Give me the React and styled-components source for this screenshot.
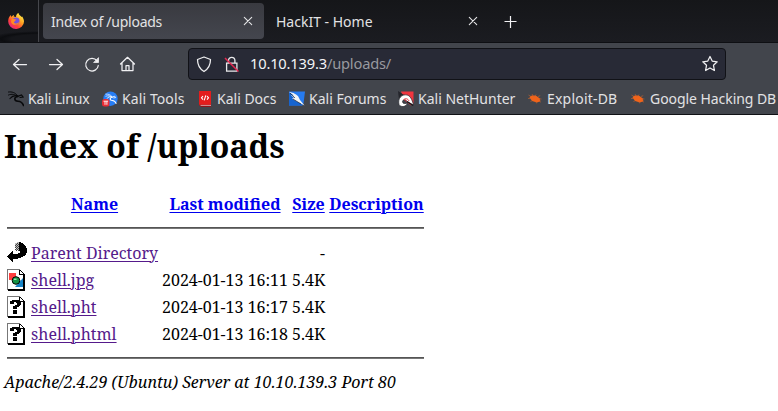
import React from "react";
import styled, { createGlobalStyle } from "styled-components";

const Global = createGlobalStyle`
  * { box-sizing: border-box; }
  html, body { margin: 0; background: #fff; overflow: hidden; }
`;

const Browser = styled.div`
  width: 778px;
  height: 411px;
  overflow: hidden;
  display: flex;
  flex-direction: column;
  background: #fff;
`;
const Chrome = styled.header`
  height: 115px;
  flex: none;
  color: #e2e2e4;
  background: #42454c;
  border-bottom: 1px solid #101115;
  font: 14px/20px "Noto Sans", sans-serif;
  white-space: nowrap;
`;
const TabStrip = styled.div`
  height: 43px;
  display: flex;
  background: linear-gradient(#151619, #1b1c21);
  border-bottom: 1px solid #0e0f13;
`;
const Pinned = styled.div`
  width: 39px;
  height: 42px;
  padding: 13px 0 0 8px;
  border-right: 1px solid #46474c;
  background: radial-gradient(ellipse 52px 8px at 40px 39px, #15161a 55%, #0c0d10 75%, transparent 100%);
  svg { display: block; }
`;
const Tab = styled.div`
  width: ${(p) => p.$width}px;
  height: 36px;
  margin: 3px 0 0 4px;
  padding: 0 10px 0 8px;
  display: flex;
  align-items: center;
  justify-content: space-between;
  border-radius: 4px;
  background: ${(p) => (p.$active ? "linear-gradient(#393a40, #44464e)" : "transparent")};
`;
const NewTab = styled.div`
  margin: 14px 0 0 14px;
  height: 16px;
`;
const Label = styled.span`
  display: block;
  letter-spacing: ${(p) => p.$track || 0}px;
`;
const TabLabel = styled(Label)`
  padding-top: 2px;
`;
const Toolbar = styled.div`
  height: 41px;
  display: flex;
  align-items: center;
  padding-left: 11px;
`;
const NavButtons = styled.div`
  display: flex;
  gap: 18px;
  width: 177px;
  svg { display: block; }
`;
const Address = styled.div`
  width: 538px;
  height: 32px;
  display: flex;
  align-items: center;
  padding: 0 6px;
  border: 1px solid #111217;
  border-radius: 4px;
  background: #282a36;
  color: #f4f4f6;
  svg { display: block; flex: none; }
`;
const Url = styled.span`
  flex: 1;
  margin-left: 9px;
  padding-bottom: 2px;
  font-size: 14.67px;
  letter-spacing: -0.18px;
`;
const Path = styled.span`
  color: #98999f;
`;
const Bookmarks = styled.nav`
  height: 30px;
  display: flex;
  padding-left: 8px;
`;
const Bookmark = styled.div`
  flex: none;
  width: ${(p) => p.$width}px;
  display: flex;
  align-items: center;
  gap: 4px;
  svg { display: block; flex: none; }
`;
const Page = styled.main`
  font: 16px/22px "Noto Serif", "Droid Serif", "DejaVu Serif Condensed", serif;
  color: #000;
  white-space: nowrap;
`;
const Title = styled.h1`
  margin: 9px 0 0 4px;
  font-size: 32px;
  line-height: 44px;
  font-weight: 700;
`;
const Listing = styled.div`
  margin: 21px 0 0 7px;
  width: 417px;
`;
const Row = styled.div`
  display: grid;
  grid-template-columns: 20px 127px 126px 33px 95px;
  column-gap: 4px;
  height: 27px;
  align-items: center;
  svg { display: block; }
`;
const HeadRow = styled(Row)`
  height: 38px;
  padding-bottom: 8px;
  text-align: center;
  font-weight: 700;
`;
const Rule = styled.hr`
  height: 2px;
  margin: 0;
  border: 0;
  border-top: 1px solid #555;
  border-bottom: 1px solid #777;
`;
const Files = styled.div`
  padding: 10px 0 10px;
`;
const Link = styled.a`
  color: ${(p) => (p.$visited ? "#551a8b" : "#0000ee")};
  text-decoration: underline;
  text-decoration-thickness: 1px;
  text-underline-offset: 2px;
`;
const Cell = styled.span`
  text-align: ${(p) => (p.$right ? "right" : "left")};
`;
const Footer = styled.address`
  margin: 12px 0 0 4px;
`;

const Firefox = () => (
  <svg width="16" height="16" viewBox="0 0 16 16">
    <defs>
      <linearGradient id="fx" x1=".85" y1=".1" x2=".2" y2=".95">
        <stop offset="0" stopColor="#fff04a" />
        <stop offset=".4" stopColor="#ff9a20" />
        <stop offset=".7" stopColor="#ff4238" />
        <stop offset="1" stopColor="#e52682" />
      </linearGradient>
    </defs>
    <path d="M1 4.500 2.500 2l1 2C4 3 5 2 6 2l-.3 1.600L8 4c0-2 1-3.400 2.500-4 .1 2 2 2.400 3.200 4l.5-.6C15.500 5.500 16 7 16 8.500A7.800 7.500 0 0 1 8 16 7.800 7.500 0 0 1 .2 8.500C.2 7 .5 5.500 1 4.500Z" fill="url(#fx)" />
    <circle cx="8.100" cy="8" r="3.400" fill="#7650dc" />
    <path d="M3.500 6.500C5 5.600 7 6 8.500 6.800 7 7.300 7 8.500 5.800 9.200c1 2 4.200 1.500 5.200-.5.400 3-6.500 5-8 .3Z" fill="#ff8a24" />
  </svg>
);
const Close = () => (
  <svg width="12" height="12" viewBox="0 0 12 12" stroke="#e4e4e6" strokeWidth="1.100" strokeLinecap="round">
    <path d="M2.300 2.300l7.400 7.400M9.700 2.300l-7.400 7.400" />
  </svg>
);
const Plus = () => (
  <svg width="16" height="16" viewBox="0 0 16 16" stroke="#f2f2f4" strokeWidth="1.200">
    <path d="M7.500 2v12M1.500 7.500h12" />
  </svg>
);
const NavIcon = ({ children }) => (
  <svg width="18" height="18" viewBox="0 0 18 18" fill="none" stroke="#f0f0f2" strokeWidth="1.250" strokeLinecap="round" strokeLinejoin="round">
    {children}
  </svg>
);
const Dragon = ({ color = "#08090b" }) => (
  <g fill="none" stroke={color} strokeLinecap="round">
    <path d="M.5 1C4 .5 7 1.500 9.500 4.500M.5 4C4 2.500 7 3.500 9 5" strokeWidth="1" />
    <path d="M2 7.500C4 5 7 4 10.500 5l3-1 1.500 2-3 .5" strokeWidth="1.200" />
    <path d="M10 5.500C5.500 6 6 10 10 10.200c3 .2 4.500 1.300 5.500 4.300" strokeWidth="1.600" />
  </g>
);
const Mark = ({ kind }) => (
  <svg width="16" height="16" viewBox="0 0 16 16">
    {kind === "linux" && <Dragon />}
    {kind === "tools" && (
      <>
        <circle cx="8.500" cy="7.700" r="7.200" fill="#267df5" />
        <g transform="translate(3.500 2.500) scale(.68)"><Dragon color="#fff" /></g>
        <rect x="0" y="8" width="7.500" height="7.500" rx="2.500" fill="#e92d35" />
        <path d="M1.500 10.200h4.600M3 10.200v3.600M4.900 10.200v3.600" stroke="#fff" strokeWidth=".9" fill="none" />
      </>
    )}
    {kind === "docs" && (
      <>
        <path d="M2 0h12v15.500H4l-2-1.500Z" fill="#e31d1d" />
        <path d="M2 13.700h12v2H4Z" fill="#8c0d13" />
        <path d="M3.500 14.400H14" stroke="#f8dada" strokeWidth=".7" />
        <path d="M6 5 4.500 6.800 6 8.600M10 5l1.500 1.800L10 8.600M8.800 4.300 7.200 9.300" fill="none" stroke="#fff" strokeWidth="1.100" />
      </>
    )}
    {kind === "forums" && (
      <>
        <path d="M0 .5h16l-1.500 12-2 2H0Z" fill="#267bf0" />
        <path d="M0 .5 14 14.500H0Z" fill="#1764cf" />
        <path d="M0 1C5 1.500 7 3.500 9 5l2 4 4.500 5.500L7 10 3 7.500 5 7 2 4l3 .5Z" fill="#f4f4f4" />
        <path d="M1 2l5 5M4 8l8 5" stroke="#202634" strokeWidth=".7" />
      </>
    )}
    {kind === "nethunter" && (
      <>
        <path d="M3 .5h12.500v12L13 14.500 6 9Z" fill="#f0353f" />
        <path d="M0 0 6 4 1 9Z" fill="#24252b" />
        <path d="M1 13.500C-.5 7 4 3 9 4c3 .6 5 4 6.500 10L9 10.500C8 8 4.500 8.500 4.500 10.700c0 2 3 2.500 5 1-1 4.500-7 5-8.500 1.800Z" fill="#fff" stroke="#24252c" strokeWidth=".7" />
        <path d="M5.500 9C7 6.800 10 7.500 11 10" fill="none" stroke="#f0353f" strokeWidth="1" />
        <path d="M9 10.500l6 4" stroke="#18191e" strokeWidth="1.300" />
      </>
    )}
    {kind === "exploit" && (
      <>
        <path d="M2.500 6.500C3.500 4.500 6 4 9.500 5l3 2.200 1 3-3.500 1.300L5 10Z" fill="#f0631a" />
        <path d="M1.500 4 4 5.500M5 3l1.500 2.500M9 3.500 8 5.500M11 5.500l2.200-.8M12 8h2.500M12 10l1.800 1.200M9 10.500l.5 1.800M5 9.500 3.500 11M3.500 7.500H1" stroke="#c8632c" strokeWidth=".6" />
      </>
    )}
  </svg>
);
const dither = [];
for (let y = 1; y < 9; y += 1) {
  for (let x = 8; x < 13; x += 1) {
    if ((x + y) % 2 && (y > 1 || x > 9)) dither.push(`M${x} ${y}h1v1h-1Z`);
  }
}
const BackIcon = () => (
  <svg width="20" height="22" viewBox="0 0 20 22" shapeRendering="crispEdges">
    <path d="M10 0h2v1h1v8h-2V8H9V6H8V1h2Z" fill="#bdbdbd" />
    <path d={dither.join("")} fill="#444" />
    <path d="M12 0h2v1h2v1h1v1h1v1h1v2h1v5h-1v2h-1v1h-2v1h-2v1h-3v1H6v3H5v-1H4v-1H3v-1H2v-1H1v-1H0v-1h1v-1h1v-1h1v-1h1v-1h1V9h1v3h5v-1h2V9h-1Z" fill="#000" />
  </svg>
);
const FileIcon = ({ image }) => (
  <svg width="20" height="22" viewBox="0 0 20 22" shapeRendering="crispEdges">
    <path d="M0 0h13v1h1v1h1v1h1v1h1v1h1v17H1v-1H0Z" fill="#000" />
    <path d="M0 0h13v1H1v20H0Z" fill="#777" />
    <path d="M1 1h11v5h4v14H1Z" fill="#fff" />
    <path d="M13 2h1v1h1v1h1v1h-3Z" fill="#fff" />
    {image ? (
      <g shapeRendering="auto">
        <path d="M2 4h7v7H2Z" fill="#ff4040" />
        <path d="M16 9v9H8Z" fill="#1684c7" />
        <circle cx="9" cy="11.500" r="3.800" fill="#159447" stroke="#000" />
        <path d="M6.800 10.300h2.700" stroke="#a3edb9" strokeWidth="1.300" />
      </g>
    ) : (
      <>
        <path d="M5 4h7v1h1v1h1v3h-1v1h-1v1h-2v2H6v-3h2V9h2V7H9V6H7v2H3V5h2Z" fill="#000" />
        <path d="M6 14h4v4H6Z" fill="#000" />
      </>
    )}
  </svg>
);

const bookmarks = [
  ["linux", "Kali Linux", 94, -0.15],
  ["tools", "Kali Tools", 95, 0.1],
  ["docs", "Kali Docs", 92, 0],
  ["forums", "Kali Forums", 109, 0],
  ["nethunter", "Kali NetHunter", 129, 0],
  ["exploit", "Exploit-DB", 103, 0.2],
  ["exploit", "Google Hacking DB", 148, -0.06],
];
const files = [
  ["shell.jpg", "2024-01-13 16:11", true],
  ["shell.pht", "2024-01-13 16:17", false],
  ["shell.phtml", "2024-01-13 16:18", false],
];

export default function App() {
  return (
    <Browser>
      <Global />
      <Chrome>
        <TabStrip>
          <Pinned><Firefox /></Pinned>
          <Tab $active $width={221}><TabLabel $track={-0.25}>Index of /uploads</TabLabel><Close /></Tab>
          <Tab $width={221}><TabLabel>HackIT - Home</TabLabel><Close /></Tab>
          <NewTab><Plus /></NewTab>
        </TabStrip>
        <Toolbar>
          <NavButtons>
            <NavIcon><path d="M2.500 9.500H15.500M8 4.500l-5.500 5 5.500 5" /></NavIcon>
            <NavIcon><path d="M2.500 9.500H15.500M10 4.500l5.500 5-5.500 5" /></NavIcon>
            <NavIcon><path d="M14 5.800A6.300 6.300 0 1 0 15.300 10.500" /><path d="M15.500 3v4.500H11Z" fill="#f0f0f2" strokeWidth=".8" /></NavIcon>
            <NavIcon><path d="M1.500 9 8.500 2.300l7 6.700M3 8v7.500h11V8M7 15.500v-5h3v5" /></NavIcon>
          </NavButtons>
          <Address>
            <NavIcon><path d="M9 2 15.500 4.500C15.500 10 14 13.500 9 16.500 4 13.500 2.500 10 2.500 4.500Z" /></NavIcon>
            <svg width="28" height="18" viewBox="0 0 28 18" fill="none" stroke="#e9e9eb" strokeWidth="1.300">
              <path d="M15.500 8V5.500a3.200 3.200 0 0 1 6.400 0V8M13.600 8.200h10.300v8H13.600Z" />
              <path d="M12 3l13.500 13.500" stroke="#e22850" strokeWidth="1.500" />
            </svg>
            <Url>10.10.139.3<Path>/uploads/</Path></Url>
            <NavIcon><path d="M9 1.500l2.200 4.600 5 .7-3.700 3.500.9 5.200L9 13 4.600 15.500l.9-5.200L1.800 6.800l5-.7Z" /></NavIcon>
          </Address>
        </Toolbar>
        <Bookmarks>
          {bookmarks.map(([kind, text, width, track]) => (
            <Bookmark key={text} $width={width}><Mark kind={kind} /><Label $track={track}>{text}</Label></Bookmark>
          ))}
        </Bookmarks>
      </Chrome>
      <Page>
        <Title>Index of /uploads</Title>
        <Listing>
          <HeadRow>
            <span />
            <span><Link>Name</Link></span>
            <span><Link>Last modified</Link></span>
            <span><Link>Size</Link></span>
            <span><Link>Description</Link></span>
          </HeadRow>
          <Rule />
          <Files>
            <Row><BackIcon /><span><Link $visited>Parent Directory</Link></span><span /><Cell $right>-</Cell><span /></Row>
            {files.map(([name, date, image]) => (
              <Row key={name}>
                <FileIcon image={image} />
                <span><Link $visited>{name}</Link></span>
                <Cell>{date}</Cell>
                <Cell>5.4K</Cell>
                <span />
              </Row>
            ))}
          </Files>
          <Rule />
        </Listing>
        <Footer>Apache/2.4.29 (Ubuntu) Server at 10.10.139.3 Port 80</Footer>
      </Page>
    </Browser>
  );
}
